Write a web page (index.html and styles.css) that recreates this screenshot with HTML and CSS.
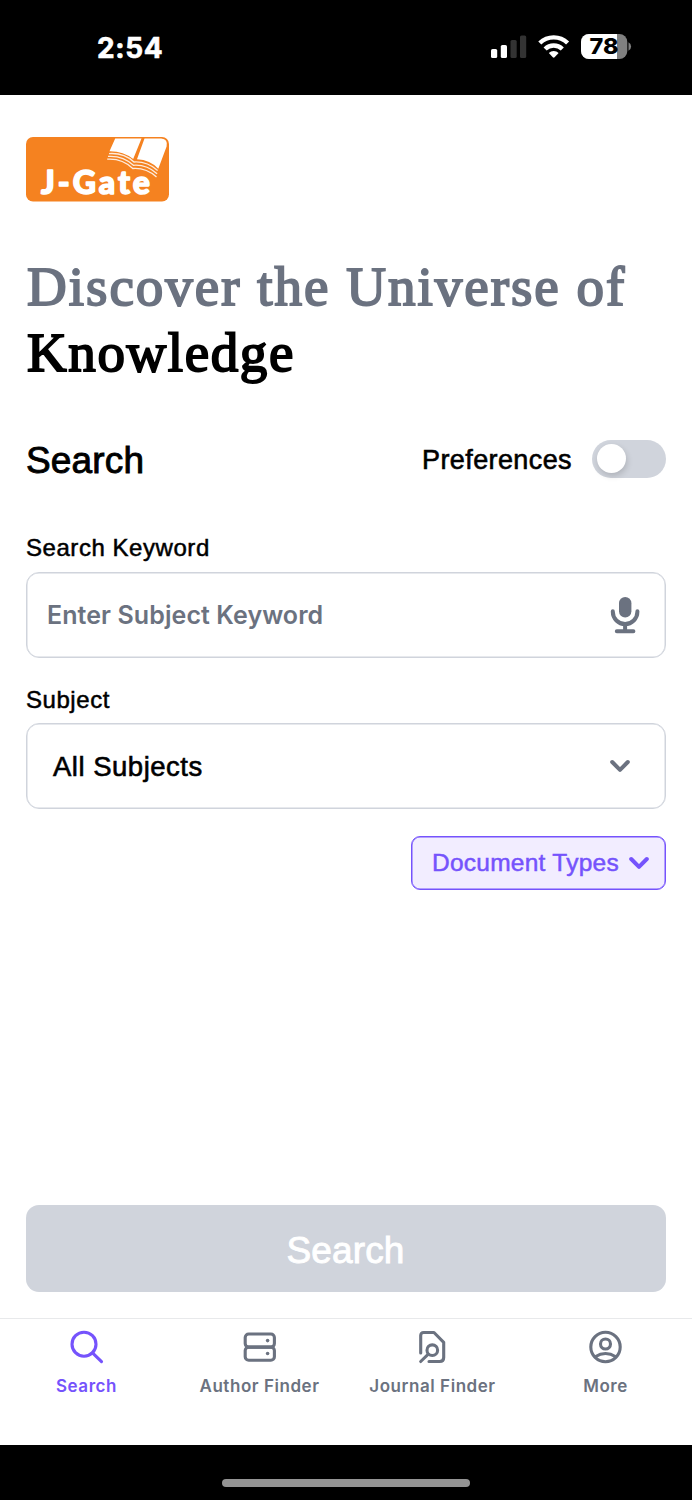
FILE: index.html
```html
<!DOCTYPE html>
<html lang="en">
<head>
<meta charset="utf-8">
<title>J-Gate</title>
<link rel="stylesheet" href="styles.css">
</head>
<body>
<div class="phone">
  <header class="status">
    <span class="clock">2:54</span>
    <svg class="indicators" viewBox="490 32 142 30">
      <rect x="491" y="49" width="6.2" height="9" rx="1.6" fill="#fff"/>
      <rect x="500.8" y="45" width="6.2" height="13" rx="1.6" fill="#fff"/>
      <rect x="510.5" y="40" width="6.2" height="18" rx="1.6" fill="#333"/>
      <rect x="520" y="35.5" width="6.2" height="22.5" rx="1.6" fill="#333"/>
      <g fill="none" stroke="#fff" stroke-width="4.4">
        <path d="M539.8 43a20 20 0 0 1 27.8 0"/>
        <path d="M545.1 49a12.3 12.3 0 0 1 17.2 0"/>
      </g>
      <path d="M548.8 53.1a7 7 0 0 1 9.8 0l-4 4.2q-.9.9-1.8 0z" fill="#fff"/>
      <clipPath id="cell"><rect x="581" y="34" width="46.3" height="25" rx="8"/></clipPath>
      <g clip-path="url(#cell)"><rect x="581" y="34" width="47" height="25" fill="#808080"/><rect x="581" y="34" width="36" height="25" fill="#fff"/></g>
      <path d="M628.5 42.3q2.6 1.2 2.6 4.2t-2.6 4.2z" fill="#808080"/>
      <text class="charge" x="589.5" y="54.3" textLength="29" lengthAdjust="spacingAndGlyphs">78</text>
    </svg>
  </header>
  <main class="content">
    <svg class="logo" viewBox="0 0 143 65">
      <rect width="143" height="64.5" rx="7" fill="#f58220"/>
      <path d="M89.2 1.5h26.3l-8.3 20.5q-10-8-23.7-7.8z" fill="#fff"/>
      <path d="M118.5 1.5h16.7q7 .5 5.4 8l-8.3 22.3q-8-8.8-21.3-9.5z" fill="#fff"/>
      <g fill="none" stroke="#fff" stroke-opacity=".85" stroke-width="1.3">
        <path d="M83 16.6q15-1 25 8.4 13-.8 23.6 8.4"/>
        <path d="M82 19.4q15-1 25.4 8.9 13-1 23.7 8.4"/>
        <path d="M81.2 22.2q15-1 25.6 9.3 13-1 23.7 8.4"/>
      </g>
      <text class="logo-text" x="15" y="57.3" textLength="109">J-Gate</text>
    </svg>
    <h1 class="title"><span class="muted">Discover the Universe of</span><span class="strong">Knowledge</span></h1>
    <div class="row">
      <h2 class="heading">Search</h2>
      <div class="pref"><span class="pref-label">Preferences</span><span class="toggle"><i class="knob"></i></span></div>
    </div>
    <div class="label">Search Keyword</div>
    <div class="field keyword">
      <span class="placeholder">Enter Subject Keyword</span>
      <svg class="mic" viewBox="0 0 30 38">
        <rect x="9" y="1" width="12.4" height="20.5" rx="6.2" fill="#6b7280"/>
        <path d="M2.8 15.2v.6a12.3 12.3 0 0 0 24.6 0v-.6M15.1 28v6.5M6.8 35.2h16.6" fill="none" stroke="#6b7280" stroke-width="4" stroke-linecap="round"/>
      </svg>
    </div>
    <div class="label second">Subject</div>
    <div class="field subject">
      <span class="value">All Subjects</span>
      <svg class="chevron" viewBox="0 0 20 14"><path d="M2.2 3l7.8 7.8 7.8-7.8" fill="none" stroke="#6b7280" stroke-width="4" stroke-linecap="round" stroke-linejoin="round"/></svg>
    </div>
    <div class="types">
      <span class="types-label">Document Types</span>
      <svg class="chevron" viewBox="0 0 20 14"><path d="M2.2 3l7.8 7.8 7.8-7.8" fill="none" stroke="#7553fc" stroke-width="4" stroke-linecap="round" stroke-linejoin="round"/></svg>
    </div>
    <div class="submit"><span class="submit-label">Search</span></div>
  </main>
  <nav class="tabs">
    <div class="tab active">
      <svg class="icon" viewBox="0 0 36 36"><circle cx="15" cy="15.2" r="12" /><path d="M23.5 23.8l9 8.8"/></svg>
      <span class="tab-label">Search</span>
    </div>
    <div class="tab">
      <svg class="icon" viewBox="0 0 36 36"><rect x="3.2" y="5" width="29.2" height="13.1" rx="3.5"/><rect x="3.2" y="18.1" width="29.2" height="13.1" rx="3.5"/><circle class="dot" cx="25.6" cy="11.6" r="1.8"/><circle class="dot" cx="25.6" cy="24.5" r="1.8"/></svg>
      <span class="tab-label">Author Finder</span>
    </div>
    <div class="tab">
      <svg class="icon" viewBox="0 0 36 36"><path d="M5.7 24V6.5q0-3 3-3H19l9.7 9.8v15.2q0 4-4 4H14"/><circle cx="17.3" cy="21.2" r="5.3"/><path d="M13.3 25.2l-7.6 7.3"/></svg>
      <span class="tab-label">Journal Finder</span>
    </div>
    <div class="tab">
      <svg class="icon" viewBox="0 0 36 36"><circle cx="17.5" cy="18" r="14.7"/><circle cx="17.5" cy="15" r="5"/><path d="M7.2 27.7q10.3-6.4 20.6 0"/></svg>
      <span class="tab-label">More</span>
    </div>
  </nav>
  <footer class="home"><span class="bar"></span></footer>
</div>
</body>
</html>
```

FILE: styles.css
```css
* { box-sizing: border-box; }
body { margin: 0; font-family: "Liberation Sans", Arial, sans-serif; color: #000; background: #fff; }
.phone { width: 692px; height: 1500px; display: flex; flex-direction: column; overflow: hidden; }
svg { display: block; flex: none; }

.status { height: 95px; background: #000; display: flex; justify-content: space-between; padding: 32px 60px 0 97px; }
.clock { font: 700 28px/32px Inter, sans-serif; color: #fff; letter-spacing: 0.6px; -webkit-text-stroke: 0.6px #fff; }
.indicators { width: 142px; height: 30px; }
.charge { font: 800 22px Inter, sans-serif; }

.content { height: 1223px; padding: 42px 26px 0; display: flex; flex-direction: column; }
.logo { width: 143px; height: 65px; }
.logo-text { font: 900 32px Lato, sans-serif; fill: #fff; stroke: #fff; stroke-width: 1.5px; stroke-linejoin: round; }

.title { margin: 52px 0 0; height: 132px; padding-left: 1px; font: 400 55px/66px "Liberation Serif", serif; -webkit-text-stroke: 1.9px currentColor; white-space: nowrap; }
.title span { display: block; }
.muted { color: #6b7280; letter-spacing: 2px; }
.strong { letter-spacing: 1.6px; }

.row { margin-top: 54px; height: 38px; display: flex; align-items: center; justify-content: space-between; }
.heading { margin: 3px 0 0; font-size: 37px; font-weight: 400; line-height: 40px; letter-spacing: 0.15px; -webkit-text-stroke: 0.9px #000; }
.pref { display: flex; align-items: center; gap: 20px; }
.pref-label { padding-top: 2px; font-size: 27px; line-height: 38px; letter-spacing: 0.4px; -webkit-text-stroke: 0.6px #000; }
.toggle { width: 74px; height: 38px; border-radius: 19px; background: #d0d4dc; padding: 4px 5px; }
.knob { display: block; width: 29px; height: 29px; border-radius: 50%; background: #fff; box-shadow: 1px 3px 6px rgba(0, 0, 0, 0.16); }

.label { margin-top: 55px; height: 30px; margin-bottom: 9px; font-size: 24px; line-height: 30px; letter-spacing: 0.55px; -webkit-text-stroke: 0.5px #000; }
.label.second { margin-top: 27px; margin-bottom: 8px; }
.field { height: 86px; border: 1px solid #d0d4dc; box-shadow: inset 0 0 0 0.5px #d0d4dc; border-radius: 13px; display: flex; align-items: center; justify-content: space-between; }
.keyword { padding: 0 25px 0 20px; }
.placeholder { font: 600 25px/32px Inter, sans-serif; letter-spacing: 0.08px; color: #6b7280; }
.mic { width: 30px; height: 38px; }
.subject { padding: 0 35px 0 26px; }
.value { padding-top: 2px; font-size: 27.5px; letter-spacing: 0.5px; -webkit-text-stroke: 0.6px #000; }
.chevron { width: 20px; height: 14px; }

.types { align-self: flex-end; margin-top: 27px; width: 255px; height: 54px; padding: 0 16px 0 20px; border: 1px solid #7553fc; box-shadow: inset 0 0 0 0.5px #7553fc; border-radius: 9px; background: #f2edff; display: flex; align-items: center; justify-content: space-between; color: #7553fc; }
.types-label { font-size: 24.5px; letter-spacing: 0.25px; -webkit-text-stroke: 0.5px #7553fc; }
.submit { margin-top: 315px; height: 87px; border-radius: 13px; background: #d0d4dc; color: #fff; display: flex; align-items: center; justify-content: center; }
.submit-label { padding: 4px 1px 0 0; font-size: 37px; letter-spacing: 0.15px; -webkit-text-stroke: 0.9px #fff; }

.tabs { height: 127px; border-top: 1px solid #e8e9eb; display: grid; grid-template-columns: repeat(4, 173px); padding-top: 10px; }
.tab { display: flex; flex-direction: column; align-items: center; color: #6b7280; }
.active { color: #7553fc; }
.icon { width: 36px; height: 36px; fill: none; stroke: currentColor; stroke-width: 3.1; stroke-linecap: round; stroke-linejoin: round; }
.dot { fill: currentColor; stroke: none; }
.tab-label { margin-top: 10px; font: 600 17px/22px Inter, sans-serif; letter-spacing: 0.55px; white-space: nowrap; }

.home { height: 55px; background: #000; display: flex; justify-content: center; padding-top: 34px; }
.bar { width: 248px; height: 8px; border-radius: 4px; background: #949494; }
```
